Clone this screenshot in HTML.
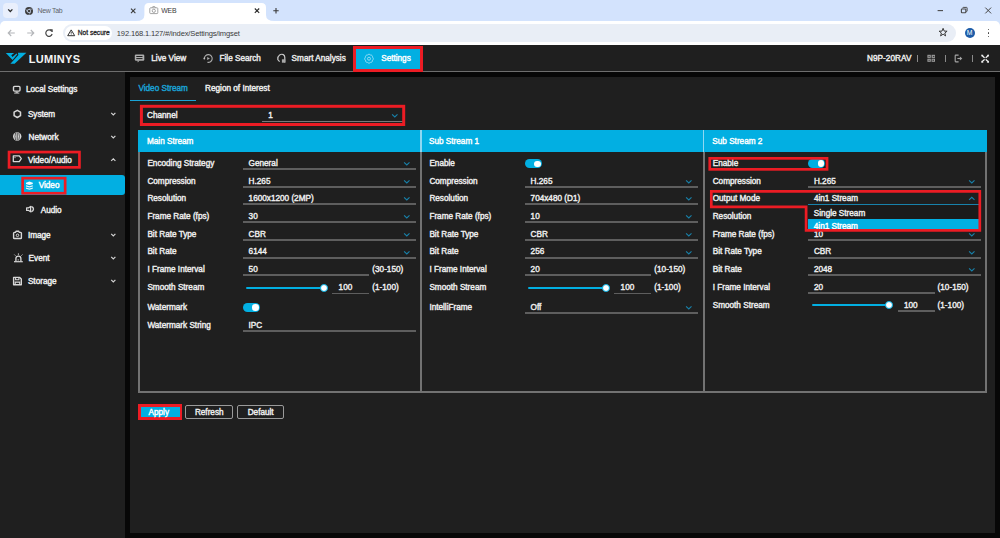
<!DOCTYPE html>
<html><head><meta charset="utf-8">
<style>
*{box-sizing:border-box;margin:0;padding:0}
html,body{width:1000px;height:538px;overflow:hidden;background:#070707;font-family:"Liberation Sans",sans-serif;position:relative}
.a{position:absolute}
.t{position:absolute;white-space:nowrap;line-height:1}
svg{overflow:visible}
</style></head><body>

<div class="a" style="left:0.00px;top:0.00px;width:1000.00px;height:28.00px;background:#d3e3fd;"></div>
<div class="a" style="left:3.00px;top:3.00px;width:14.70px;height:14.70px;background:#e9effc;border-radius:4px"></div>
<svg class="a" style="left:0.00px;top:0.00px;" width="20" height="20" viewBox="0 0 20 20"><path d="M8.2 9.4 L10.3 11.5 L12.4 9.4" fill="none" stroke="#2b2b2b" stroke-width="1.3"/></svg>
<svg class="a" style="left:24.00px;top:5.50px;" width="10" height="10" viewBox="0 0 10 10"><circle cx="5" cy="5" r="4" fill="#3d3d3d"/><circle cx="5" cy="5" r="1.9" fill="#d3e3fd"/><circle cx="5" cy="5" r="1.2" fill="#3d3d3d"/><path d="M5 3.1 L8.6 3.1 M3.4 6 L1.6 3 M6.6 6 L4.8 9" stroke="#d3e3fd" stroke-width="0.5"/></svg>
<div class="t" style="left:37.50px;top:8px;font-size:6.9px;color:#5f6368;font-weight:normal;letter-spacing:-0.25px">New Tab</div>
<svg class="a" style="left:128.00px;top:6.00px;" width="10" height="10" viewBox="0 0 10 10"><path d="M3 2.7 L7.4 7.1 M7.4 2.7 L3 7.1" stroke="#3a3a3a" stroke-width="1.1"/></svg>
<svg class="a" style="left:136px;top:2px" width="140" height="19" viewBox="0 0 140 19"><path d="M0 19 Q8.4 19 8.4 13 L8.4 5.5 Q8.4 1 12.9 1 L125.5 1 Q130 1 130 5.5 L130 13 Q130 19 138.4 19 Z" fill="#ffffff"/></svg>
<svg class="a" style="left:148.50px;top:6.00px;" width="10" height="9" viewBox="0 0 10 9"><rect x="0.8" y="1.8" width="8" height="5.8" rx="0.8" fill="none" stroke="#9a9a9a" stroke-width="0.9"/><circle cx="4.8" cy="4.8" r="1.6" fill="none" stroke="#9a9a9a" stroke-width="0.9"/><path d="M3 1.8 L3.8 0.6 L5.8 0.6 L6.6 1.8" fill="none" stroke="#9a9a9a" stroke-width="0.9"/></svg>
<div class="t" style="left:161.20px;top:8px;font-size:6.9px;color:#3a3a3a;font-weight:normal;letter-spacing:-0.2px">WEB</div>
<svg class="a" style="left:252.00px;top:6.00px;" width="10" height="10" viewBox="0 0 10 10"><path d="M2.8 2.5 L7.2 6.9 M7.2 2.5 L2.8 6.9" stroke="#2a2a2a" stroke-width="1.1"/></svg>
<svg class="a" style="left:271.00px;top:6.00px;" width="10" height="10" viewBox="0 0 10 10"><path d="M5 2 L5 7.4 M2.3 4.7 L7.7 4.7" stroke="#3a3a3a" stroke-width="1.1"/></svg>
<svg class="a" style="left:935.00px;top:5.00px;" width="12" height="12" viewBox="0 0 12 12"><path d="M2.6 5.6 L8 5.6" stroke="#4a4a4a" stroke-width="1.1"/></svg>
<svg class="a" style="left:959.00px;top:5.00px;" width="12" height="12" viewBox="0 0 12 12"><rect x="2.4" y="4" width="4.4" height="3.8" rx="0.6" fill="none" stroke="#4a4a4a" stroke-width="1.1"/><path d="M3.8 3.4 L3.8 2.9 Q3.8 2.4 4.3 2.4 L7.6 2.4 Q8.1 2.4 8.1 2.9 L8.1 6 Q8.1 6.5 7.6 6.5 L7.2 6.5" fill="none" stroke="#4a4a4a" stroke-width="1"/></svg>
<svg class="a" style="left:983.00px;top:5.00px;" width="12" height="12" viewBox="0 0 12 12"><path d="M2.3 2.6 L8.1 8.4 M8.1 2.6 L2.3 8.4" stroke="#444" stroke-width="1"/></svg>
<div class="a" style="left:0.00px;top:21.00px;width:1000.00px;height:24.00px;background:#ffffff;border-radius:5px 5px 0 0"></div>
<svg class="a" style="left:6.00px;top:28.00px;" width="12" height="10" viewBox="0 0 12 10"><path d="M2.2 5 L8.8 5 M5.2 2 L2.2 5 L5.2 8" fill="none" stroke="#b4b6b9" stroke-width="1.1"/></svg>
<svg class="a" style="left:25.00px;top:28.00px;" width="12" height="10" viewBox="0 0 12 10"><path d="M2.2 5 L8.8 5 M5.8 2 L8.8 5 L5.8 8" fill="none" stroke="#b4b6b9" stroke-width="1.1"/></svg>
<svg class="a" style="left:44.00px;top:28.00px;" width="10" height="10" viewBox="0 0 10 10"><path d="M7.7 3.4 A3.2 3.2 0 1 0 8.1 6" fill="none" stroke="#474747" stroke-width="1.2"/><path d="M6 1.6 L8.4 1.6 L8.4 4 Z" fill="#474747" stroke="#474747" stroke-width="0.6"/></svg>
<div class="a" style="left:63.00px;top:24.00px;width:893.00px;height:17.60px;background:#e9eef6;border-radius:9px"></div>
<div class="a" style="left:65.00px;top:26.00px;width:47.00px;height:13.60px;background:#ffffff;border-radius:7px"></div>
<svg class="a" style="left:67.00px;top:29.00px;" width="9" height="8" viewBox="0 0 9 8"><path d="M4.2 0.9 L7.7 6.7 L0.7 6.7 Z" fill="none" stroke="#333" stroke-width="1"/><path d="M4.2 2.9 L4.2 4.7" stroke="#333" stroke-width="0.9"/><circle cx="4.2" cy="5.6" r="0.45" fill="#333"/></svg>
<div class="t" style="left:77.80px;top:30px;font-size:6.6px;color:#2b2b2b;font-weight:normal;-webkit-text-stroke-width:0.3px">Not secure</div>
<div class="t" style="left:116.80px;top:30px;font-size:7.55px;color:#3b3b3b;font-weight:normal;letter-spacing:-0.15px">192.168.1.127/#/index/Settings/imgset</div>
<svg class="a" style="left:938.00px;top:27.00px;" width="12" height="11" viewBox="0 0 12 11"><path d="M5.1 1.3 L6.2 4.1 L9.1 4.2 L6.8 6 L7.6 8.9 L5.1 7.2 L2.6 8.9 L3.4 6 L1.1 4.2 L4 4.1 Z" fill="none" stroke="#3a3a3a" stroke-width="1" stroke-linejoin="round"/></svg>
<div class="a" style="left:964.6px;top:27.5px;width:10.6px;height:10.6px;border-radius:50%;background:#1d5ca8"></div>
<div class="t" style="left:966.80px;top:30px;font-size:6.8px;color:#ffffff;font-weight:normal;">M</div>
<div class="a" style="left:987.8px;top:28.55px;width:1.5px;height:1.5px;border-radius:50%;background:#3c3c3c"></div>
<div class="a" style="left:987.8px;top:32.25px;width:1.5px;height:1.5px;border-radius:50%;background:#3c3c3c"></div>
<div class="a" style="left:987.8px;top:35.85px;width:1.5px;height:1.5px;border-radius:50%;background:#3c3c3c"></div>
<div class="a" style="left:0.00px;top:45.00px;width:1000.00px;height:26.00px;background:#1f1f1f;"></div>
<div class="a" style="left:0.00px;top:71.00px;width:1000.00px;height:1.00px;background:#6e6e6e;"></div>
<svg class="a" style="left:3.00px;top:49.00px;" width="27" height="18" viewBox="0 0 27 18"><path d="M2.8 4 L11.2 4 L8.3 6.3 L9.4 7.9 L13.5 4.5 L14.3 5.3 L9.6 10.9 Z" fill="#02afe2"/><path d="M14.9 3.8 L23.4 3.8 L11.6 14.8 L7.4 14.8 L10.4 11.6 L15.4 5.9 Z" fill="#02afe2"/></svg>
<div class="t" style="left:28.80px;top:54px;font-size:11px;color:#f4f4f4;font-weight:bold;letter-spacing:0.28px">LUMINYS</div>
<svg class="a" style="left:133.00px;top:52.00px;" width="13" height="12" viewBox="0 0 13 12"><rect x="1.8" y="2.5" width="9.5" height="6.2" rx="1.2" fill="#adadad"/><rect x="3.3" y="4.0" width="6.2" height="1" fill="#1f1f1f"/><rect x="3.3" y="6.1" width="6.2" height="1" fill="#1f1f1f"/><path d="M4.4 8.5 L6.6 8.5 L4.8 10.4 Z" fill="#adadad"/></svg>
<div class="t" style="left:151.30px;top:55px;font-size:8.2px;color:#ededed;font-weight:normal;-webkit-text-stroke-width:0.4px;">Live View</div>
<svg class="a" style="left:202.00px;top:53.00px;" width="12" height="11" viewBox="0 0 12 11"><path d="M2.4 5.5 A3.9 3.9 0 1 1 5.4 9.3" fill="none" stroke="#acacac" stroke-width="1.1"/><circle cx="2.3" cy="5.5" r="0.9" fill="#c4c4c4"/><path d="M5.2 3.9 L7.9 5.5 L5.2 7.1 Z" fill="#acacac"/></svg>
<div class="t" style="left:219.50px;top:55px;font-size:8.2px;color:#ededed;font-weight:normal;-webkit-text-stroke-width:0.4px;">File Search</div>
<svg class="a" style="left:276.00px;top:52.00px;" width="11" height="11" viewBox="0 0 11 11"><path d="M3.6 9.6 L1.8 7.6 Q1.6 4.2 3.6 2.9 Q5.5 1.8 7.3 2.6 Q8.8 3.4 8.8 5.6 L8.8 10.6" fill="none" stroke="#c8c8c8" stroke-width="1.2"/><rect x="5.9" y="7.3" width="3.4" height="3.4" fill="#a8a8a8"/></svg>
<div class="t" style="left:291.60px;top:55px;font-size:8.2px;color:#ededed;font-weight:normal;-webkit-text-stroke-width:0.4px;">Smart Analysis</div>
<div class="a" style="left:353.30px;top:45.70px;width:69.50px;height:25.90px;background:#ec1c24;"></div>
<div class="a" style="left:356.10px;top:48.70px;width:63.90px;height:20.10px;background:#02afe2;"></div>
<svg class="a" style="left:363.00px;top:53.00px;" width="13" height="12" viewBox="0 0 13 12"><path d="M6 1.3 Q7 1.3 7.5 2 Q8.4 1.9 9.1 2.6 Q9.6 3.4 9.5 4.2 Q10.3 4.9 10.3 5.7 Q10.3 6.6 9.5 7.2 Q9.6 8.1 9.1 8.8 Q8.4 9.5 7.5 9.4 Q7 10.1 6 10.1 Q5 10.1 4.5 9.4 Q3.6 9.5 2.9 8.8 Q2.4 8.1 2.5 7.2 Q1.7 6.6 1.7 5.7 Q1.7 4.9 2.5 4.2 Q2.4 3.4 2.9 2.6 Q3.6 1.9 4.5 2 Q5 1.3 6 1.3 Z" fill="none" stroke="#9fe0f6" stroke-width="0.9"/><circle cx="6" cy="5.7" r="1.5" fill="none" stroke="#9fe0f6" stroke-width="0.9"/></svg>
<div class="t" style="left:381.20px;top:55px;font-size:8.2px;color:#ffffff;font-weight:normal;-webkit-text-stroke-width:0.4px;">Settings</div>
<div class="t" style="left:867.00px;top:55px;font-size:8.2px;color:#f0f0f0;font-weight:normal;-webkit-text-stroke-width:0.4px;letter-spacing:0.05px">N9P-20RAV</div>
<div class="a" style="left:916.90px;top:55.00px;width:1.00px;height:6.80px;background:#8a8a8a;"></div>
<div class="a" style="left:944.50px;top:55.00px;width:1.00px;height:6.80px;background:#8a8a8a;"></div>
<div class="a" style="left:972.00px;top:55.00px;width:1.00px;height:6.80px;background:#8a8a8a;"></div>
<svg class="a" style="left:926.00px;top:54.00px;" width="11" height="10" viewBox="0 0 11 10"><rect x="1.4" y="0.8" width="3.4" height="3.1" fill="#9c9c9c"/><rect x="5.6" y="0.8" width="3.4" height="3.1" fill="#9c9c9c"/><rect x="1.4" y="4.7" width="3.4" height="3.1" fill="#9c9c9c"/><rect x="5.6" y="4.7" width="3.4" height="3.1" fill="#9c9c9c"/><rect x="2.6" y="1.9" width="1" height="1" fill="#1f1f1f"/><rect x="6.8" y="1.9" width="1.6" height="0.9" fill="#1f1f1f"/><rect x="2.6" y="5.8" width="1" height="1" fill="#1f1f1f"/><rect x="6.6" y="5.7" width="1.2" height="1.1" fill="#1f1f1f"/></svg>
<svg class="a" style="left:953.00px;top:54.00px;" width="11" height="10" viewBox="0 0 11 10"><path d="M5.6 1.1 L2.8 1.1 Q2.2 1.1 2.2 1.7 L2.2 7.3 Q2.2 7.9 2.8 7.9 L5.6 7.9" fill="none" stroke="#a6a6a6" stroke-width="1.1"/><path d="M4.4 4.5 L7.6 4.5" stroke="#a6a6a6" stroke-width="1.1"/><path d="M6.9 2.6 L9.3 4.5 L6.9 6.4 Z" fill="#a6a6a6"/></svg>
<svg class="a" style="left:979.00px;top:53.00px;" width="12" height="11" viewBox="0 0 12 11"><path d="M3 2.6 L5.2 4.6 M9.3 2.6 L7.1 4.6 M3 8.8 L5.2 6.8 M9.3 8.8 L7.1 6.8" stroke="#f2f2f2" stroke-width="1.3" stroke-linecap="round"/><path d="M2.4 1.6 L4.6 2 L2.8 3.8 Z M9.9 1.6 L7.7 2 L9.5 3.8 Z M2.4 9.8 L4.6 9.4 L2.8 7.6 Z M9.9 9.8 L7.7 9.4 L9.5 7.6 Z" fill="#f2f2f2"/></svg>
<div class="a" style="left:0.00px;top:72.00px;width:125.00px;height:466.00px;background:#1f1f1f;"></div>
<div class="t" style="left:26.00px;top:86px;font-size:8.2px;color:#f0f0f0;font-weight:normal;-webkit-text-stroke-width:0.4px;">Local Settings</div>
<svg class="a" style="left:12.00px;top:83.70px;" width="11" height="10" viewBox="0 0 11 10"><rect x="1.5" y="2.4" width="6.5" height="4.7" rx="1" fill="none" stroke="#d8d8d8" stroke-width="1.4"/><path d="M3.9 7.8 L5.6 7.8 L6.1 8.7 L3.4 8.7 Z" fill="#d8d8d8"/><path d="M2.2 9.1 L7.3 9.1" stroke="#d8d8d8" stroke-width="0.9"/></svg>
<div class="t" style="left:27.90px;top:111px;font-size:8.2px;color:#f0f0f0;font-weight:normal;-webkit-text-stroke-width:0.4px;">System</div>
<svg class="a" style="left:12.20px;top:108.80px;" width="11" height="10" viewBox="0 0 11 10"><path d="M5.3 1.3 L8.5 3.1 L8.5 6.7 L5.3 8.5 L2.1 6.7 L2.1 3.1 Z" fill="none" stroke="#d8d8d8" stroke-width="1.5" stroke-linejoin="round"/></svg>
<svg class="a" style="left:109.00px;top:110.80px;" width="8" height="6" viewBox="0 0 8 6"><path d="M2.2 1.9 L4.3 3.9 L6.4 1.9" fill="none" stroke="#d4d4d4" stroke-width="1.2"/></svg>
<div class="t" style="left:28.60px;top:134px;font-size:8.2px;color:#f0f0f0;font-weight:normal;-webkit-text-stroke-width:0.4px;">Network</div>
<svg class="a" style="left:12.40px;top:131.80px;" width="11" height="10" viewBox="0 0 11 10"><circle cx="5.2" cy="4.5" r="4.2" fill="#d8d8d8"/><path d="M5.2 0.6 L5.2 8.4" stroke="#2a2a2a" stroke-width="0.8"/><path d="M3.6 1 Q2.3 4.5 3.6 8 M6.8 1 Q8.1 4.5 6.8 8" fill="none" stroke="#2a2a2a" stroke-width="0.7"/></svg>
<svg class="a" style="left:109.00px;top:133.80px;" width="8" height="6" viewBox="0 0 8 6"><path d="M2.2 1.9 L4.3 3.9 L6.4 1.9" fill="none" stroke="#d4d4d4" stroke-width="1.2"/></svg>
<div class="t" style="left:27.90px;top:157px;font-size:8.2px;color:#f0f0f0;font-weight:normal;-webkit-text-stroke-width:0.4px;">Video/Audio</div>
<svg class="a" style="left:12.30px;top:154.80px;" width="11" height="10" viewBox="0 0 11 10"><path d="M1.3 0.95 L7.3 0.95 L9.3 3.6 L7.3 6.6 L1.3 6.6 Z" fill="none" stroke="#d8d8d8" stroke-width="1.3" stroke-linejoin="round"/><circle cx="3" cy="2.6" r="0.6" fill="#d8d8d8"/></svg>
<svg class="a" style="left:109.00px;top:156.80px;" width="8" height="6" viewBox="0 0 8 6"><path d="M2.2 3.9 L4.3 1.9 L6.4 3.9" fill="none" stroke="#d4d4d4" stroke-width="1.2"/></svg>
<div class="a" style="left:0.00px;top:174.60px;width:125.00px;height:20.60px;background:#02afe2;border-radius:0 3px 3px 0"></div>
<div class="t" style="left:38.70px;top:182px;font-size:8.2px;color:#ffffff;font-weight:normal;-webkit-text-stroke-width:0.4px;">Video</div>
<svg class="a" style="left:24.00px;top:180.50px;" width="10" height="10" viewBox="0 0 10 10"><path d="M5.4 0.6 L8.8 1.7 L8.8 3.1 L5.4 4.1 L2 3.1 L2 1.7 Z" fill="#f4fbff"/><path d="M2 4.3 L5.4 5.3 L8.8 4.3 L8.8 5.5 L5.4 6.5 L2 5.5 Z M2 6.5 L5.4 7.5 L8.8 6.5 L8.8 7.7 L5.4 8.7 L2 7.7 Z" fill="#dff3fb"/></svg>
<div class="t" style="left:40.70px;top:207px;font-size:8.2px;color:#f0f0f0;font-weight:normal;-webkit-text-stroke-width:0.4px;">Audio</div>
<svg class="a" style="left:25.00px;top:205.00px;" width="10" height="9" viewBox="0 0 10 9"><path d="M1.6 2.8 L3.7 2.8 L5.6 1.4 L5.6 6.8 L3.7 5.4 L1.6 5.4 Z" fill="none" stroke="#d8d8d8" stroke-width="1.2" stroke-linejoin="round"/><path d="M6.3 1.5 A3 2.7 0 0 1 6.3 6.7" fill="none" stroke="#d8d8d8" stroke-width="1.4"/></svg>
<div class="t" style="left:27.90px;top:232px;font-size:8.2px;color:#f0f0f0;font-weight:normal;-webkit-text-stroke-width:0.4px;">Image</div>
<svg class="a" style="left:12.30px;top:229.80px;" width="11" height="10" viewBox="0 0 11 10"><path d="M1.6 3.2 Q1.6 2.4 2.4 2.4 L3.4 2.4 L4.2 1.3 L6.6 1.3 L7.4 2.4 L8.6 2.4 Q9.4 2.4 9.4 3.2 L9.4 7.7 Q9.4 8.5 8.6 8.5 L2.4 8.5 Q1.6 8.5 1.6 7.7 Z" fill="none" stroke="#d8d8d8" stroke-width="1.4"/><circle cx="5.5" cy="5.3" r="1.3" fill="none" stroke="#d8d8d8" stroke-width="1"/></svg>
<svg class="a" style="left:109.00px;top:231.80px;" width="8" height="6" viewBox="0 0 8 6"><path d="M2.2 1.9 L4.3 3.9 L6.4 1.9" fill="none" stroke="#d4d4d4" stroke-width="1.2"/></svg>
<div class="t" style="left:28.60px;top:255px;font-size:8.2px;color:#f0f0f0;font-weight:normal;-webkit-text-stroke-width:0.4px;">Event</div>
<svg class="a" style="left:12.50px;top:252.70px;" width="11" height="10" viewBox="0 0 11 10"><path d="M2.9 8.2 L2.9 5.6 A2.5 2.5 0 0 1 7.9 5.6 L7.9 8.2" fill="none" stroke="#d8d8d8" stroke-width="1.3"/><path d="M1 8.7 L9.8 8.7" stroke="#d8d8d8" stroke-width="1.2"/><path d="M5.4 0.4 L5.4 1.8 M1.4 1.6 L2.4 2.6 M9.4 1.6 L8.4 2.6" stroke="#d8d8d8" stroke-width="1"/><path d="M5.2 6.2 L5.2 7.6" stroke="#d8d8d8" stroke-width="0.9"/></svg>
<svg class="a" style="left:109.00px;top:254.70px;" width="8" height="6" viewBox="0 0 8 6"><path d="M2.2 1.9 L4.3 3.9 L6.4 1.9" fill="none" stroke="#d4d4d4" stroke-width="1.2"/></svg>
<div class="t" style="left:27.90px;top:278px;font-size:8.2px;color:#f0f0f0;font-weight:normal;-webkit-text-stroke-width:0.4px;">Storage</div>
<svg class="a" style="left:12.30px;top:275.80px;" width="11" height="10" viewBox="0 0 11 10"><path d="M1.6 1.4 L7.7 1.4 L9.3 3 L9.3 8.7 L1.6 8.7 Z" fill="none" stroke="#d8d8d8" stroke-width="1.4" stroke-linejoin="round"/><path d="M3.6 1.4 L3.6 3.7 L6.9 3.7 L6.9 1.4 M3.2 8.7 L3.2 6.1 L7.7 6.1 L7.7 8.7" fill="none" stroke="#d8d8d8" stroke-width="1.1"/></svg>
<svg class="a" style="left:109.00px;top:277.80px;" width="8" height="6" viewBox="0 0 8 6"><path d="M2.2 1.9 L4.3 3.9 L6.4 1.9" fill="none" stroke="#d4d4d4" stroke-width="1.2"/></svg>
<svg class="a" style="left:0.00px;top:0.00px;" width="1" height="1" viewBox="0 0 1 1"><rect x="9.05" y="152.05" width="70.40" height="15.30" fill="none" stroke="#ec1c24" stroke-width="2.7"/></svg>
<svg class="a" style="left:0.00px;top:0.00px;" width="1" height="1" viewBox="0 0 1 1"><rect x="22.65" y="178.15" width="42.50" height="15.10" fill="none" stroke="#ec1c24" stroke-width="2.7"/></svg>
<div class="a" style="left:130.00px;top:77.00px;width:865.00px;height:456.00px;background:#1f1f1f;"></div>
<div class="t" style="left:138.40px;top:85px;font-size:8.2px;color:#1aa3d6;font-weight:normal;-webkit-text-stroke-width:0.4px;">Video Stream</div>
<div class="t" style="left:205.10px;top:85px;font-size:8.2px;color:#f0f0f0;font-weight:normal;-webkit-text-stroke-width:0.4px;">Region of Interest</div>
<div class="a" style="left:130.40px;top:99.60px;width:66.10px;height:1.80px;background:#1aa3d6;"></div>
<div class="t" style="left:147.00px;top:112px;font-size:8.2px;color:#f0f0f0;font-weight:normal;-webkit-text-stroke-width:0.4px;">Channel</div>
<div class="t" style="left:268.20px;top:112px;font-size:8.2px;color:#f0f0f0;font-weight:normal;-webkit-text-stroke-width:0.4px;">1</div>
<div class="a" style="left:262.00px;top:120.80px;width:141.00px;height:1.30px;background:#7a7a7a;"></div>
<svg class="a" style="left:391.20px;top:113.20px;" width="8" height="6" viewBox="0 0 8 6"><path d="M1.1 1.3 L3.8 3.9 L6.5 1.3" fill="none" stroke="#1882ab" stroke-width="1.1"/></svg>
<svg class="a" style="left:0.00px;top:0.00px;" width="1" height="1" viewBox="0 0 1 1"><rect x="141.40" y="106.30" width="262.30" height="18.20" fill="none" stroke="#ec1c24" stroke-width="3.0"/></svg>
<div class="a" style="left:138.40px;top:130.40px;width:848.20px;height:21.40px;background:#02afe2;"></div>
<div class="a" style="left:138.00px;top:151.80px;width:2.00px;height:240.20px;background:#727272;"></div>
<div class="a" style="left:985.00px;top:151.80px;width:2.00px;height:240.20px;background:#727272;"></div>
<div class="a" style="left:138.00px;top:390.80px;width:849.00px;height:2.00px;background:#727272;"></div>
<div class="a" style="left:420.30px;top:130.40px;width:1.40px;height:21.40px;background:#8fd8f2;"></div>
<div class="a" style="left:420.00px;top:151.80px;width:2.00px;height:239.00px;background:#727272;"></div>
<div class="a" style="left:703.10px;top:130.40px;width:1.40px;height:21.40px;background:#8fd8f2;"></div>
<div class="a" style="left:702.80px;top:151.80px;width:2.00px;height:239.00px;background:#727272;"></div>
<div class="t" style="left:147.00px;top:138px;font-size:8.2px;color:#ffffff;font-weight:normal;-webkit-text-stroke-width:0.4px;">Main Stream</div>
<div class="t" style="left:429.00px;top:138px;font-size:8.2px;color:#ffffff;font-weight:normal;-webkit-text-stroke-width:0.4px;">Sub Stream 1</div>
<div class="t" style="left:712.30px;top:138px;font-size:8.2px;color:#ffffff;font-weight:normal;-webkit-text-stroke-width:0.4px;">Sub Stream 2</div>
<div class="t" style="left:147.40px;top:160px;font-size:8.2px;color:#eeeeee;font-weight:normal;-webkit-text-stroke-width:0.4px;">Encoding Strategy</div>
<div class="t" style="left:248.60px;top:160px;font-size:8.2px;color:#eeeeee;font-weight:normal;-webkit-text-stroke-width:0.4px;">General</div>
<div class="a" style="left:242.90px;top:168.00px;width:172.80px;height:2.00px;background:#5e5e5e;"></div>
<svg class="a" style="left:403.00px;top:160.90px;" width="8" height="6" viewBox="0 0 8 6"><path d="M1.1 1.3 L3.8 3.9 L6.5 1.3" fill="none" stroke="#1882ab" stroke-width="1.1"/></svg>
<div class="t" style="left:147.40px;top:178px;font-size:8.2px;color:#eeeeee;font-weight:normal;-webkit-text-stroke-width:0.4px;">Compression</div>
<div class="t" style="left:248.60px;top:178px;font-size:8.2px;color:#eeeeee;font-weight:normal;-webkit-text-stroke-width:0.4px;">H.265</div>
<div class="a" style="left:242.90px;top:186.00px;width:172.80px;height:2.00px;background:#5e5e5e;"></div>
<svg class="a" style="left:403.00px;top:178.62px;" width="8" height="6" viewBox="0 0 8 6"><path d="M1.1 1.3 L3.8 3.9 L6.5 1.3" fill="none" stroke="#1882ab" stroke-width="1.1"/></svg>
<div class="t" style="left:147.40px;top:195px;font-size:8.2px;color:#eeeeee;font-weight:normal;-webkit-text-stroke-width:0.4px;">Resolution</div>
<div class="t" style="left:248.60px;top:195px;font-size:8.2px;color:#eeeeee;font-weight:normal;-webkit-text-stroke-width:0.4px;">1600x1200 (2MP)</div>
<div class="a" style="left:242.90px;top:203.00px;width:172.80px;height:2.00px;background:#5e5e5e;"></div>
<svg class="a" style="left:403.00px;top:196.34px;" width="8" height="6" viewBox="0 0 8 6"><path d="M1.1 1.3 L3.8 3.9 L6.5 1.3" fill="none" stroke="#1882ab" stroke-width="1.1"/></svg>
<div class="t" style="left:147.40px;top:213px;font-size:8.2px;color:#eeeeee;font-weight:normal;-webkit-text-stroke-width:0.4px;">Frame Rate (fps)</div>
<div class="t" style="left:248.60px;top:213px;font-size:8.2px;color:#eeeeee;font-weight:normal;-webkit-text-stroke-width:0.4px;">30</div>
<div class="a" style="left:242.90px;top:221.00px;width:172.80px;height:2.00px;background:#5e5e5e;"></div>
<svg class="a" style="left:403.00px;top:214.06px;" width="8" height="6" viewBox="0 0 8 6"><path d="M1.1 1.3 L3.8 3.9 L6.5 1.3" fill="none" stroke="#1882ab" stroke-width="1.1"/></svg>
<div class="t" style="left:147.40px;top:231px;font-size:8.2px;color:#eeeeee;font-weight:normal;-webkit-text-stroke-width:0.4px;">Bit Rate Type</div>
<div class="t" style="left:248.60px;top:231px;font-size:8.2px;color:#eeeeee;font-weight:normal;-webkit-text-stroke-width:0.4px;">CBR</div>
<div class="a" style="left:242.90px;top:239.00px;width:172.80px;height:2.00px;background:#5e5e5e;"></div>
<svg class="a" style="left:403.00px;top:231.78px;" width="8" height="6" viewBox="0 0 8 6"><path d="M1.1 1.3 L3.8 3.9 L6.5 1.3" fill="none" stroke="#1882ab" stroke-width="1.1"/></svg>
<div class="t" style="left:147.40px;top:248px;font-size:8.2px;color:#eeeeee;font-weight:normal;-webkit-text-stroke-width:0.4px;">Bit Rate</div>
<div class="t" style="left:248.60px;top:248px;font-size:8.2px;color:#eeeeee;font-weight:normal;-webkit-text-stroke-width:0.4px;">6144</div>
<div class="a" style="left:242.90px;top:257.00px;width:172.80px;height:2.00px;background:#5e5e5e;"></div>
<svg class="a" style="left:403.00px;top:249.50px;" width="8" height="6" viewBox="0 0 8 6"><path d="M1.1 1.3 L3.8 3.9 L6.5 1.3" fill="none" stroke="#1882ab" stroke-width="1.1"/></svg>
<div class="t" style="left:147.40px;top:266px;font-size:8.2px;color:#eeeeee;font-weight:normal;-webkit-text-stroke-width:0.4px;">I Frame Interval</div>
<div class="t" style="left:248.60px;top:266px;font-size:8.2px;color:#eeeeee;font-weight:normal;-webkit-text-stroke-width:0.4px;">50</div>
<div class="a" style="left:242.70px;top:274.00px;width:126.50px;height:2.00px;background:#5e5e5e;"></div>
<div class="t" style="left:372.30px;top:266px;font-size:8.2px;color:#eeeeee;font-weight:normal;-webkit-text-stroke-width:0.4px;">(30-150)</div>
<div class="t" style="left:147.40px;top:284px;font-size:8.2px;color:#eeeeee;font-weight:normal;-webkit-text-stroke-width:0.4px;">Smooth Stream</div>
<div class="a" style="left:246.40px;top:286.60px;width:78.30px;height:2.00px;background:#02afe2;border-radius:1px"></div>
<div class="a" style="left:320.00px;top:283.60px;width:8px;height:8px;border-radius:50%;background:#ffffff;border:1.6px solid #02afe2"></div>
<div class="t" style="left:338.60px;top:284px;font-size:8.2px;color:#eeeeee;font-weight:normal;-webkit-text-stroke-width:0.4px;">100</div>
<div class="a" style="left:332.20px;top:292.70px;width:37.00px;height:1.50px;background:#5e5e5e;"></div>
<div class="t" style="left:372.30px;top:284px;font-size:8.2px;color:#eeeeee;font-weight:normal;-webkit-text-stroke-width:0.4px;">(1-100)</div>
<div class="t" style="left:147.40px;top:304px;font-size:8.2px;color:#eeeeee;font-weight:normal;-webkit-text-stroke-width:0.4px;">Watermark</div>
<div class="a" style="left:242.70px;top:303.20px;width:17px;height:9px;border-radius:4.5px;background:#02afe2"></div>
<div class="a" style="left:252.00px;top:304.40px;width:6.6px;height:6.6px;border-radius:50%;background:#ffffff"></div>
<div class="t" style="left:147.40px;top:322px;font-size:8.2px;color:#eeeeee;font-weight:normal;-webkit-text-stroke-width:0.4px;">Watermark String</div>
<div class="t" style="left:248.60px;top:322px;font-size:8.2px;color:#eeeeee;font-weight:normal;-webkit-text-stroke-width:0.4px;">IPC</div>
<div class="a" style="left:242.90px;top:330.00px;width:172.80px;height:2.00px;background:#5e5e5e;"></div>
<div class="t" style="left:429.40px;top:160px;font-size:8.2px;color:#eeeeee;font-weight:normal;-webkit-text-stroke-width:0.4px;">Enable</div>
<div class="a" style="left:525.00px;top:159.30px;width:17px;height:9px;border-radius:4.5px;background:#02afe2"></div>
<div class="a" style="left:534.30px;top:160.50px;width:6.6px;height:6.6px;border-radius:50%;background:#ffffff"></div>
<div class="t" style="left:429.40px;top:178px;font-size:8.2px;color:#eeeeee;font-weight:normal;-webkit-text-stroke-width:0.4px;">Compression</div>
<div class="t" style="left:530.60px;top:178px;font-size:8.2px;color:#eeeeee;font-weight:normal;-webkit-text-stroke-width:0.4px;">H.265</div>
<div class="a" style="left:524.90px;top:186.00px;width:172.80px;height:2.00px;background:#5e5e5e;"></div>
<svg class="a" style="left:685.00px;top:178.62px;" width="8" height="6" viewBox="0 0 8 6"><path d="M1.1 1.3 L3.8 3.9 L6.5 1.3" fill="none" stroke="#1882ab" stroke-width="1.1"/></svg>
<div class="t" style="left:429.40px;top:195px;font-size:8.2px;color:#eeeeee;font-weight:normal;-webkit-text-stroke-width:0.4px;">Resolution</div>
<div class="t" style="left:530.60px;top:195px;font-size:8.2px;color:#eeeeee;font-weight:normal;-webkit-text-stroke-width:0.4px;">704x480 (D1)</div>
<div class="a" style="left:524.90px;top:203.00px;width:172.80px;height:2.00px;background:#5e5e5e;"></div>
<svg class="a" style="left:685.00px;top:196.34px;" width="8" height="6" viewBox="0 0 8 6"><path d="M1.1 1.3 L3.8 3.9 L6.5 1.3" fill="none" stroke="#1882ab" stroke-width="1.1"/></svg>
<div class="t" style="left:429.40px;top:213px;font-size:8.2px;color:#eeeeee;font-weight:normal;-webkit-text-stroke-width:0.4px;">Frame Rate (fps)</div>
<div class="t" style="left:530.60px;top:213px;font-size:8.2px;color:#eeeeee;font-weight:normal;-webkit-text-stroke-width:0.4px;">10</div>
<div class="a" style="left:524.90px;top:221.00px;width:172.80px;height:2.00px;background:#5e5e5e;"></div>
<svg class="a" style="left:685.00px;top:214.06px;" width="8" height="6" viewBox="0 0 8 6"><path d="M1.1 1.3 L3.8 3.9 L6.5 1.3" fill="none" stroke="#1882ab" stroke-width="1.1"/></svg>
<div class="t" style="left:429.40px;top:231px;font-size:8.2px;color:#eeeeee;font-weight:normal;-webkit-text-stroke-width:0.4px;">Bit Rate Type</div>
<div class="t" style="left:530.60px;top:231px;font-size:8.2px;color:#eeeeee;font-weight:normal;-webkit-text-stroke-width:0.4px;">CBR</div>
<div class="a" style="left:524.90px;top:239.00px;width:172.80px;height:2.00px;background:#5e5e5e;"></div>
<svg class="a" style="left:685.00px;top:231.78px;" width="8" height="6" viewBox="0 0 8 6"><path d="M1.1 1.3 L3.8 3.9 L6.5 1.3" fill="none" stroke="#1882ab" stroke-width="1.1"/></svg>
<div class="t" style="left:429.40px;top:248px;font-size:8.2px;color:#eeeeee;font-weight:normal;-webkit-text-stroke-width:0.4px;">Bit Rate</div>
<div class="t" style="left:530.60px;top:248px;font-size:8.2px;color:#eeeeee;font-weight:normal;-webkit-text-stroke-width:0.4px;">256</div>
<div class="a" style="left:524.90px;top:257.00px;width:172.80px;height:2.00px;background:#5e5e5e;"></div>
<svg class="a" style="left:685.00px;top:249.50px;" width="8" height="6" viewBox="0 0 8 6"><path d="M1.1 1.3 L3.8 3.9 L6.5 1.3" fill="none" stroke="#1882ab" stroke-width="1.1"/></svg>
<div class="t" style="left:429.40px;top:266px;font-size:8.2px;color:#eeeeee;font-weight:normal;-webkit-text-stroke-width:0.4px;">I Frame Interval</div>
<div class="t" style="left:530.60px;top:266px;font-size:8.2px;color:#eeeeee;font-weight:normal;-webkit-text-stroke-width:0.4px;">20</div>
<div class="a" style="left:524.70px;top:274.00px;width:126.50px;height:2.00px;background:#5e5e5e;"></div>
<div class="t" style="left:654.30px;top:266px;font-size:8.2px;color:#eeeeee;font-weight:normal;-webkit-text-stroke-width:0.4px;">(10-150)</div>
<div class="t" style="left:429.40px;top:284px;font-size:8.2px;color:#eeeeee;font-weight:normal;-webkit-text-stroke-width:0.4px;">Smooth Stream</div>
<div class="a" style="left:528.40px;top:286.60px;width:78.30px;height:2.00px;background:#02afe2;border-radius:1px"></div>
<div class="a" style="left:602.00px;top:283.60px;width:8px;height:8px;border-radius:50%;background:#ffffff;border:1.6px solid #02afe2"></div>
<div class="t" style="left:620.60px;top:284px;font-size:8.2px;color:#eeeeee;font-weight:normal;-webkit-text-stroke-width:0.4px;">100</div>
<div class="a" style="left:614.20px;top:292.70px;width:37.00px;height:1.50px;background:#5e5e5e;"></div>
<div class="t" style="left:654.30px;top:284px;font-size:8.2px;color:#eeeeee;font-weight:normal;-webkit-text-stroke-width:0.4px;">(1-100)</div>
<div class="t" style="left:429.40px;top:304px;font-size:8.2px;color:#eeeeee;font-weight:normal;-webkit-text-stroke-width:0.4px;">IntelliFrame</div>
<div class="t" style="left:530.60px;top:304px;font-size:8.2px;color:#eeeeee;font-weight:normal;-webkit-text-stroke-width:0.4px;">Off</div>
<div class="a" style="left:524.90px;top:312.00px;width:172.80px;height:2.00px;background:#5e5e5e;"></div>
<svg class="a" style="left:685.00px;top:304.60px;" width="8" height="6" viewBox="0 0 8 6"><path d="M1.1 1.3 L3.8 3.9 L6.5 1.3" fill="none" stroke="#1882ab" stroke-width="1.1"/></svg>
<div class="t" style="left:712.70px;top:160px;font-size:8.2px;color:#eeeeee;font-weight:normal;-webkit-text-stroke-width:0.4px;">Enable</div>
<div class="a" style="left:808.20px;top:159.20px;width:17px;height:9px;border-radius:4.5px;background:#02afe2"></div>
<div class="a" style="left:817.50px;top:160.40px;width:6.6px;height:6.6px;border-radius:50%;background:#ffffff"></div>
<div class="t" style="left:712.70px;top:178px;font-size:8.2px;color:#eeeeee;font-weight:normal;-webkit-text-stroke-width:0.4px;">Compression</div>
<div class="t" style="left:813.90px;top:178px;font-size:8.2px;color:#eeeeee;font-weight:normal;-webkit-text-stroke-width:0.4px;">H.265</div>
<div class="a" style="left:808.20px;top:186.00px;width:172.80px;height:2.00px;background:#5e5e5e;"></div>
<svg class="a" style="left:968.30px;top:178.62px;" width="8" height="6" viewBox="0 0 8 6"><path d="M1.1 1.3 L3.8 3.9 L6.5 1.3" fill="none" stroke="#1882ab" stroke-width="1.1"/></svg>
<div class="t" style="left:712.70px;top:213px;font-size:8.2px;color:#eeeeee;font-weight:normal;-webkit-text-stroke-width:0.4px;">Resolution</div>
<div class="a" style="left:808.20px;top:221.00px;width:172.80px;height:2.00px;background:#5e5e5e;"></div>
<svg class="a" style="left:968.30px;top:214.06px;" width="8" height="6" viewBox="0 0 8 6"><path d="M1.1 1.3 L3.8 3.9 L6.5 1.3" fill="none" stroke="#1882ab" stroke-width="1.1"/></svg>
<div class="t" style="left:712.70px;top:231px;font-size:8.2px;color:#eeeeee;font-weight:normal;-webkit-text-stroke-width:0.4px;">Frame Rate (fps)</div>
<div class="t" style="left:813.90px;top:231px;font-size:8.2px;color:#eeeeee;font-weight:normal;-webkit-text-stroke-width:0.4px;">10</div>
<div class="a" style="left:808.20px;top:239.00px;width:172.80px;height:2.00px;background:#5e5e5e;"></div>
<svg class="a" style="left:968.30px;top:231.78px;" width="8" height="6" viewBox="0 0 8 6"><path d="M1.1 1.3 L3.8 3.9 L6.5 1.3" fill="none" stroke="#1882ab" stroke-width="1.1"/></svg>
<div class="t" style="left:712.70px;top:248px;font-size:8.2px;color:#eeeeee;font-weight:normal;-webkit-text-stroke-width:0.4px;">Bit Rate Type</div>
<div class="t" style="left:813.90px;top:248px;font-size:8.2px;color:#eeeeee;font-weight:normal;-webkit-text-stroke-width:0.4px;">CBR</div>
<div class="a" style="left:808.20px;top:257.00px;width:172.80px;height:2.00px;background:#5e5e5e;"></div>
<svg class="a" style="left:968.30px;top:249.50px;" width="8" height="6" viewBox="0 0 8 6"><path d="M1.1 1.3 L3.8 3.9 L6.5 1.3" fill="none" stroke="#1882ab" stroke-width="1.1"/></svg>
<div class="t" style="left:712.70px;top:266px;font-size:8.2px;color:#eeeeee;font-weight:normal;-webkit-text-stroke-width:0.4px;">Bit Rate</div>
<div class="t" style="left:813.90px;top:266px;font-size:8.2px;color:#eeeeee;font-weight:normal;-webkit-text-stroke-width:0.4px;">2048</div>
<div class="a" style="left:808.20px;top:274.00px;width:172.80px;height:2.00px;background:#5e5e5e;"></div>
<svg class="a" style="left:968.30px;top:267.22px;" width="8" height="6" viewBox="0 0 8 6"><path d="M1.1 1.3 L3.8 3.9 L6.5 1.3" fill="none" stroke="#1882ab" stroke-width="1.1"/></svg>
<div class="t" style="left:712.70px;top:284px;font-size:8.2px;color:#eeeeee;font-weight:normal;-webkit-text-stroke-width:0.4px;">I Frame Interval</div>
<div class="t" style="left:813.90px;top:284px;font-size:8.2px;color:#eeeeee;font-weight:normal;-webkit-text-stroke-width:0.4px;">20</div>
<div class="a" style="left:808.00px;top:292.00px;width:126.50px;height:2.00px;background:#5e5e5e;"></div>
<div class="t" style="left:937.60px;top:284px;font-size:8.2px;color:#eeeeee;font-weight:normal;-webkit-text-stroke-width:0.4px;">(10-150)</div>
<div class="t" style="left:712.70px;top:302px;font-size:8.2px;color:#eeeeee;font-weight:normal;-webkit-text-stroke-width:0.4px;">Smooth Stream</div>
<div class="a" style="left:811.70px;top:304.20px;width:78.30px;height:2.00px;background:#02afe2;border-radius:1px"></div>
<div class="a" style="left:885.30px;top:301.20px;width:8px;height:8px;border-radius:50%;background:#ffffff;border:1.6px solid #02afe2"></div>
<div class="t" style="left:903.90px;top:302px;font-size:8.2px;color:#eeeeee;font-weight:normal;-webkit-text-stroke-width:0.4px;">100</div>
<div class="a" style="left:897.50px;top:310.30px;width:37.00px;height:1.50px;background:#5e5e5e;"></div>
<div class="t" style="left:937.60px;top:302px;font-size:8.2px;color:#eeeeee;font-weight:normal;-webkit-text-stroke-width:0.4px;">(1-100)</div>
<div class="t" style="left:712.70px;top:195px;font-size:8.2px;color:#eeeeee;font-weight:normal;-webkit-text-stroke-width:0.4px;">Output Mode</div>
<div class="t" style="left:813.90px;top:195px;font-size:8.2px;color:#eeeeee;font-weight:normal;-webkit-text-stroke-width:0.4px;">4in1 Stream</div>
<div class="a" style="left:808.00px;top:204.00px;width:170.50px;height:1.20px;background:#1882ab;"></div>
<svg class="a" style="left:968.40px;top:196.20px;" width="8" height="6" viewBox="0 0 8 6"><path d="M1.1 3.9 L3.8 1.3 L6.5 3.9" fill="none" stroke="#1882ab" stroke-width="1.1"/></svg>
<div class="a" style="left:808.00px;top:205.20px;width:170.50px;height:24.00px;background:#1b1b1b;"></div>
<div class="t" style="left:813.80px;top:210px;font-size:8.2px;color:#eeeeee;font-weight:normal;-webkit-text-stroke-width:0.4px;">Single Stream</div>
<div class="a" style="left:808.00px;top:219.40px;width:170.50px;height:9.80px;background:#02afe2;"></div>
<div class="a" style="left:808px;top:219.4px;width:170.5px;height:9.8px;overflow:hidden"><div class="t" style="left:5.8px;top:3.60px;font-size:8.2px;color:#ffffff;font-weight:normal;-webkit-text-stroke-width:0.4px">4in1 Stream</div></div>
<svg class="a" style="left:700.00px;top:185.00px;" width="290" height="50" viewBox="0 0 290 50"><path d="M11.3 6.3 L279.8 6.3 L279.8 45.4 L106.1 45.4 L106.1 21.8 L11.3 21.8 Z" fill="none" stroke="#ec1c24" stroke-width="2.7"/></svg>
<svg class="a" style="left:0.00px;top:0.00px;" width="1" height="1" viewBox="0 0 1 1"><rect x="709.75" y="158.35" width="117.30" height="11.00" fill="none" stroke="#ec1c24" stroke-width="2.7"/></svg>
<div class="a" style="left:138.1px;top:404px;width:44.1px;height:15.7px;background:#ec1c24"></div>
<div class="a" style="left:140.70px;top:406.60px;width:38.90px;height:10.50px;background:#02afe2;"></div>
<div class="t" style="left:148.50px;top:409px;font-size:8.2px;color:#ffffff;font-weight:normal;-webkit-text-stroke-width:0.4px;">Apply</div>
<div class="a" style="left:184.6px;top:405.2px;width:48px;height:13.5px;border:1px solid #9a9a9a;border-radius:2px"></div>
<div class="t" style="left:194.90px;top:409px;font-size:8.2px;color:#f0f0f0;font-weight:normal;-webkit-text-stroke-width:0.4px;">Refresh</div>
<div class="a" style="left:237px;top:405.2px;width:47px;height:13.5px;border:1px solid #9a9a9a;border-radius:2px"></div>
<div class="t" style="left:247.70px;top:409px;font-size:8.2px;color:#f0f0f0;font-weight:normal;-webkit-text-stroke-width:0.4px;">Default</div>
</body></html>
